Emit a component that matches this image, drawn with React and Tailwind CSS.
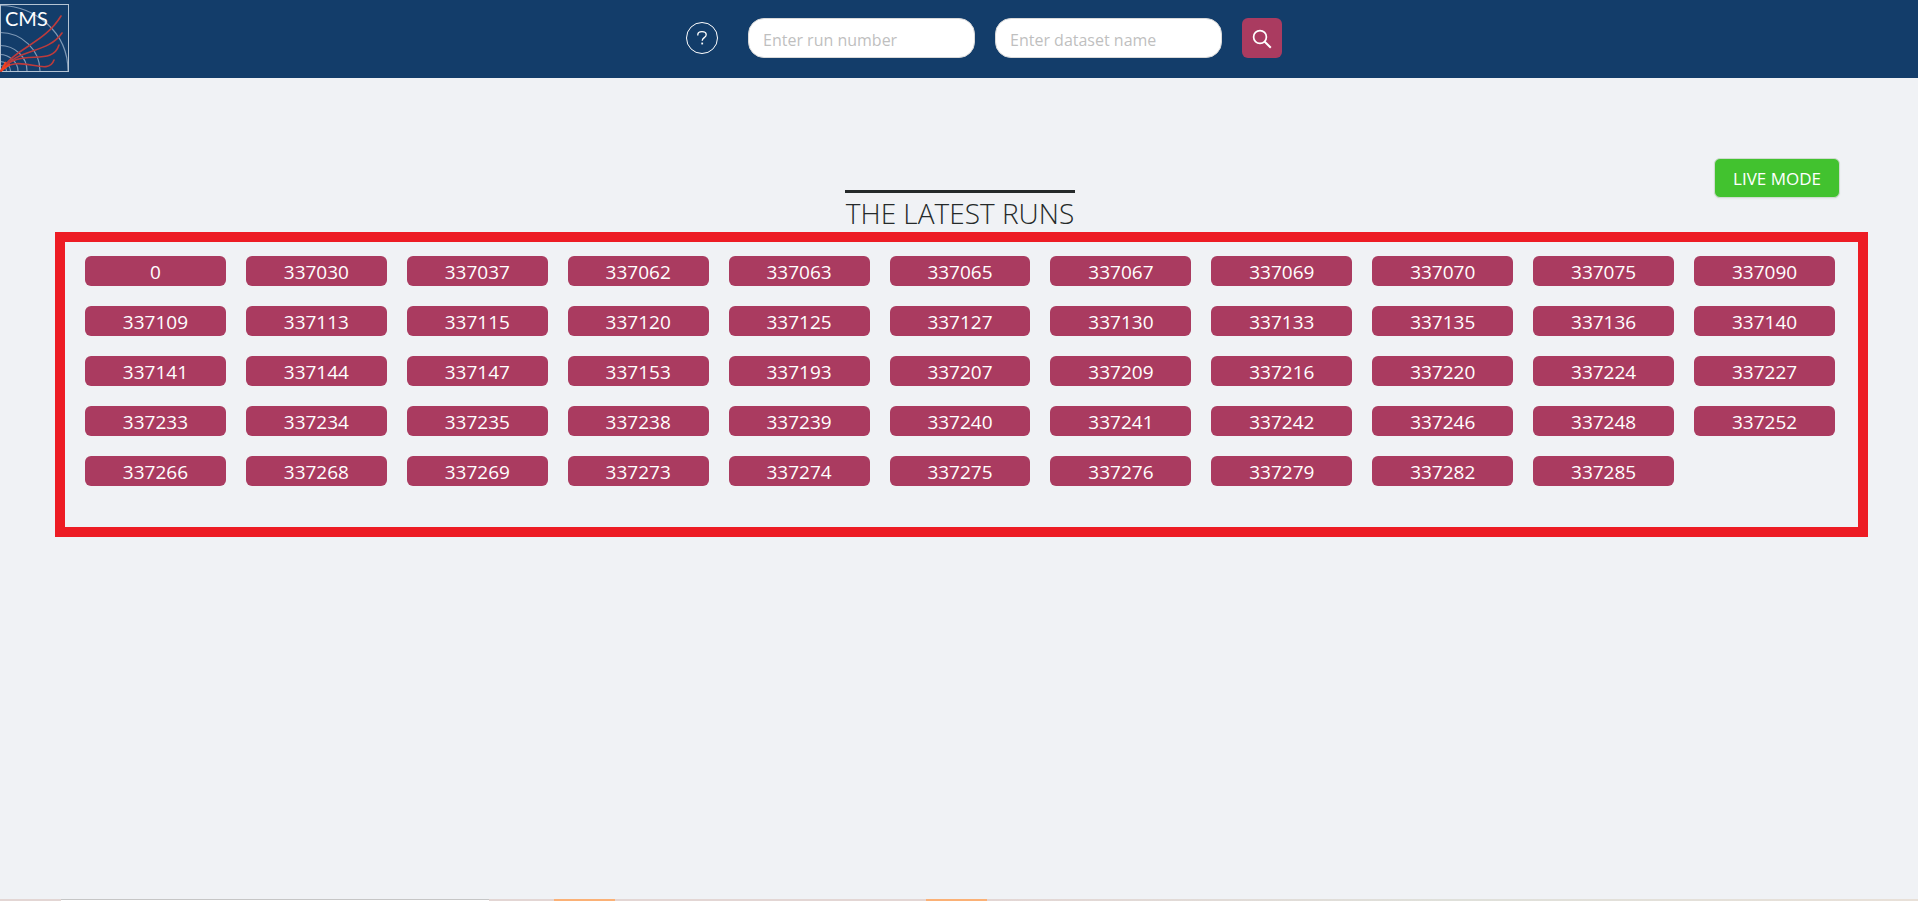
import React from "react";

const RUNS = [
  0, 337030, 337037, 337062, 337063, 337065, 337067, 337069, 337070, 337075, 337090,
  337109, 337113, 337115, 337120, 337125, 337127, 337130, 337133, 337135, 337136, 337140,
  337141, 337144, 337147, 337153, 337193, 337207, 337209, 337216, 337220, 337224, 337227,
  337233, 337234, 337235, 337238, 337239, 337240, 337241, 337242, 337246, 337248, 337252,
  337266, 337268, 337269, 337273, 337274, 337275, 337276, 337279, 337282, 337285,
];

function Logo() {
  return (
    <a href="#home" aria-label="CMS home" className="block">
      <svg className="block h-[69px] w-[69px]" viewBox="0 0 69 69" fill="none">
        <g stroke="#7f99b6" strokeWidth="1.2">
          <path d="M0 1.5C35 2 68 28 68 67" />
          <path d="M0 28.5C22 28.5 40 46 40 67" />
          <path d="M0 41.5C15 41.5 27 53 27 67" />
          <path d="M0 50.5C9 50.5 18 58 18 67" />
          <path d="M0 57.5C6 57.5 10.5 62 10.5 67" />
          <path d="M0 61.5C4 61.5 6.5 64 6.5 67" />
        </g>
        <rect x="0.5" y="0.5" width="68" height="67" stroke="#b4c3d3" />
        <g stroke="#bd3b3c" strokeWidth="1.6" strokeLinecap="round">
          <path d="M1 67C14 44 44 40 61 12" />
          <path d="M1 67C16 44 48 50 62 29" />
          <path d="M1 67C18 42 52 64 59 41" />
          <path d="M1 67C18 48 48 74 54 56" />
        </g>
        <path d="M1 67L6 58M1 67L10 60" stroke="#f0401f" strokeWidth="2" />
        <text x="5" y="22" fill="#ffffff" className="font-['Lato',sans-serif] text-[20px]">
          CMS
        </text>
      </svg>
    </a>
  );
}

function SearchField({ label }) {
  return (
    <input
      type="text"
      aria-label={label}
      placeholder={label}
      className="block h-10 w-[227px] rounded-[16px] border border-[#d9d9d9] bg-white px-[14px] pt-1 text-[16px] text-gray-800 outline-none placeholder:text-[#bfbfbf]"
    />
  );
}

function Header() {
  return (
    <header className="grid h-[78px] grid-cols-[1fr_auto_1fr] bg-[#133d6a]">
      <div className="pt-1">
        <Logo />
      </div>
      <form className="flex items-start pt-[18px] pl-[50px]" onSubmit={(e) => e.preventDefault()}>
        <button
          type="button"
          aria-label="Help"
          className="mt-1 mr-[30px] flex h-8 w-8 items-center justify-center rounded-full border border-white text-white"
        >
          <svg className="h-4 w-4" viewBox="0 0 16 16" fill="none" stroke="currentColor" strokeWidth="1.3">
            <path d="M3.8 5.5V4.8C3.8 2.9 5.6 1.7 8 1.7S12.2 2.9 12.2 4.8C12.2 7.7 8.2 7.6 8.2 10.7" />
            <path d="M8.2 12.6V14.4" strokeWidth="1.8" />
          </svg>
        </button>
        <div className="flex gap-5">
          <SearchField label="Enter run number" />
          <SearchField label="Enter dataset name" />
          <button
            type="submit"
            aria-label="Search"
            className="flex h-10 w-10 items-center justify-center rounded-md bg-[#aa3b60] pt-0.5 text-white"
          >
            <svg className="h-5 w-5" viewBox="0 0 20 20" fill="none" stroke="currentColor" strokeWidth="1.7">
              <circle cx="8" cy="8" r="6.4" />
              <path d="M12.5 12.5L18.8 18.8" strokeWidth="2" />
            </svg>
          </button>
        </div>
      </form>
      <div />
    </header>
  );
}

function BottomStrip() {
  return (
    <footer className="flex h-0.5 bg-[#e3d6d4]">
      <div className="ml-[61px] w-[428px] border-t border-[#c6c6c6] bg-white" />
      <div className="ml-[65px] w-[61px] bg-[#fbb176]" />
      <div className="ml-[311px] w-[61px] bg-[#fbb176]" />
      <div className="flex-1 bg-linear-to-r from-[#e3d6d4] via-[#dfe0da] to-[#e8e0d8]" />
    </footer>
  );
}

export default function App() {
  return (
    <div className="flex min-h-screen flex-col bg-[#f0f2f5] font-['Open_Sans','Noto_Sans',sans-serif]">
      <Header />
      <main className="flex-1 pt-20">
        <div className="grid grid-cols-[1fr_auto_1fr] items-start pr-[78px] pl-20">
          <div />
          <h1 className="mt-8 h-[42px] border-t-[3px] border-[#252a2a] px-px text-[28px] leading-10 font-light whitespace-nowrap text-[#252a2a]">
            THE LATEST RUNS
          </h1>
          <button
            type="button"
            className="h-10 justify-self-end rounded-md border border-[#cfdccf] bg-[#42c22f] px-[18px] pt-0.5 text-[17px] text-white shadow-xs"
          >
            LIVE MODE
          </button>
        </div>
        <section
          aria-label="The latest runs"
          className="mr-[50px] ml-[55px] border-[10px] border-[#ed1c24] pt-[14px] pr-[23px] pb-[41px] pl-5"
        >
          <div className="grid grid-cols-11 gap-5">
            {RUNS.map((run) => (
              <button
                key={run}
                type="button"
                className="h-[30px] rounded-md bg-[#aa3b60] pt-0.5 text-center text-[19px] leading-7 text-white"
              >
                {run}
              </button>
            ))}
          </div>
        </section>
      </main>
      <BottomStrip />
    </div>
  );
}
